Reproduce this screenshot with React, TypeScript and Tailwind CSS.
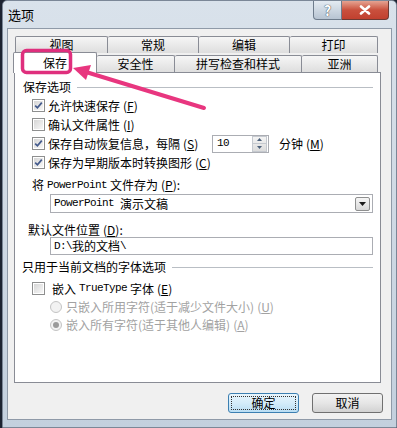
import React from 'react';

const cjk = "font-['Noto_Sans_CJK_SC','Noto_Sans_CJK_JP',sans-serif]";
const mono = "font-['Liberation_Mono','Noto_Sans_CJK_SC',monospace] tracking-[-0.6px] text-[11px]";

function CheckBox({ checked }: { checked?: boolean }) {
  return (
    <div className="w-[13px] h-[13px] shrink-0 border border-[#8e8f8f] bg-white p-px">
      <div className="w-full h-full bg-gradient-to-br from-[#d6d6d6] to-[#f7f7f7] flex items-center justify-center">
        {checked && (
          <svg width="9" height="9" viewBox="0 0 9 9">
            <path d="M1.2 4.6 L3.4 6.8 L7.8 1.6" fill="none" stroke="#435a8c" strokeWidth="1.7" />
          </svg>
        )}
      </div>
    </div>
  );
}

function Radio({ selected }: { selected?: boolean }) {
  return (
    <div className="w-[12px] h-[12px] shrink-0 rounded-full border border-[#c4c4c4] bg-[#f2f2f2] flex items-center justify-center">
      {selected && <div className="w-[6px] h-[6px] rounded-full bg-[#9a9a9a]" />}
    </div>
  );
}

function Key({ k }: { k: string }) {
  return (
    <span className="ml-[3px]">
      (<span className="underline">{k}</span>)
    </span>
  );
}

export default function App() {
  return (
    <div className={`relative w-[397px] h-[428px] bg-[#1c2331] overflow-hidden ${cjk}`}>
      <div className="ml-[2px] w-[395px] h-[428px] flex flex-col bg-gradient-to-b from-[#d9e2eb] via-[#cfd9e4] to-[#c3d0de] border border-[#7b8797] rounded-t-[5px]">
        {/* title bar */}
        <div className="h-[27px] flex items-start justify-between shrink-0">
          <div className="pl-[5px] pt-[6px] text-[13px] leading-[16px] text-black">选项</div>
          <div className="flex mr-[7px]">
            <div className="w-[29px] h-[19px] rounded-bl-[4px] border border-t-0 border-[#6e7c8c] bg-gradient-to-b from-[#e4ebf2] to-[#b7c4d2] flex items-center justify-center text-white text-[14px] font-bold leading-none [text-shadow:0_0_1px_#404a55,0_0_1px_#404a55]">
              ?
            </div>
            <div className="w-[47px] h-[19px] rounded-br-[4px] border border-l-0 border-t-0 border-[#6e3a33] bg-gradient-to-b from-[#e4a392] via-[#c9503d] to-[#c1402f] flex items-center justify-center">
              <svg width="12" height="10" viewBox="0 0 12 10">
                <path d="M2 1.5 L10 8.5 M10 1.5 L2 8.5" stroke="#fff" strokeWidth="2.6" strokeLinecap="round" />
              </svg>
            </div>
          </div>
        </div>

        {/* client area */}
        <div className="mx-[4px] h-[392px] bg-[#f0f0f0] border border-[#8f9aa8] pl-[6px] pr-[8px] pt-[7px] flex flex-col text-[12px] text-black">
          {/* upper tab row */}
          <div className="flex ml-px h-[17px] text-[12px] leading-none">
            {[
              ['视图', 'w-[93px]'],
              ['常规', 'w-[91px]'],
              ['编辑', 'w-[91px]'],
              ['打印', 'w-[88px]'],
            ].map(([t, w], i) => (
              <div
                key={t}
                className={`${w} h-[17px] border border-b-0 border-[#898c95] ${i > 0 ? 'border-l-0' : ''} rounded-t-[2px] bg-gradient-to-b from-[#f6f6f6] to-[#dedede] flex justify-center pt-[2px]`}
              >
                {t}
              </div>
            ))}
          </div>
          {/* lower tab row */}
          <div className="flex items-end -ml-px h-[19px] text-[12px] leading-none">
            <div className="relative z-10 w-[84px] h-[21px] -mb-px border border-b-0 border-[#898c95] rounded-t-[2px] bg-white flex justify-center pt-[4px]">
              保存
            </div>
            {[
              ['安全性', 'w-[78px]'],
              ['拼写检查和样式', 'w-[127px]'],
              ['亚洲', 'w-[76px]'],
            ].map(([t, w]) => (
              <div
                key={t}
                className={`${w} h-[17px] border border-l-0 border-b-0 border-[#898c95] rounded-t-[2px] bg-gradient-to-b from-[#f6f6f6] to-[#dedede] flex justify-center pt-[2px]`}
              >
                {t}
              </div>
            ))}
          </div>

          {/* panel */}
          <div className="h-[311px] w-[367px] bg-white border border-[#898c95] pt-[6px] pr-[7px] flex flex-col leading-none">
            <div className="flex items-center h-[16px] pl-[8px]">
              <span>保存选项</span>
              <div className="flex-1 ml-[6px] h-px bg-[#b9bec4]" />
            </div>

            <div className="mt-px flex flex-col">
              <div className="h-[19px] flex items-center pl-[17px]">
                <CheckBox checked />
                <span className="ml-[3px]">允许快速保存<Key k="F" /></span>
              </div>
              <div className="h-[19px] flex items-center pl-[17px]">
                <CheckBox />
                <span className="ml-[3px]">确认文件属性<Key k="I" /></span>
              </div>
              <div className="h-[19px] flex items-center pl-[17px]">
                <CheckBox checked />
                <span className="ml-[3px] w-[164px] shrink-0">保存自动恢复信息，每隔<Key k="S" /></span>
                <div className="w-[57px] h-[18px] border border-[#abadb3] flex items-center justify-between">
                  <span className={`pl-[4px] ${mono}`}>10</span>
                  <div className="w-[15px] h-[16px] mr-px flex flex-col border border-[#c5c9cf] bg-gradient-to-b from-[#f4f4f4] to-[#dcdcdc]">
                    <div className="flex-1 flex items-center justify-center border-b border-[#c5c9cf]">
                      <svg width="5" height="3" viewBox="0 0 5 3"><path d="M0 3 L2.5 0 L5 3 Z" fill="#4c607a" /></svg>
                    </div>
                    <div className="flex-1 flex items-center justify-center">
                      <svg width="5" height="3" viewBox="0 0 5 3"><path d="M0 0 L2.5 3 L5 0 Z" fill="#4c607a" /></svg>
                    </div>
                  </div>
                </div>
                <span className="ml-[10px]">分钟<Key k="M" /></span>
              </div>
              <div className="h-[19px] flex items-center pl-[17px]">
                <CheckBox checked />
                <span className="ml-[3px]">保存为早期版本时转换图形<Key k="C" /></span>
              </div>
            </div>

            <div className="mt-[5px] h-[16px] flex items-center pl-[17px]">
              将 <span className={`mx-[3px] ${mono}`}>PowerPoint</span> 文件存为<Key k="P" />:
            </div>
            <div className="mt-px ml-[35px] h-[19px] border border-[#abadb3] flex items-center justify-between">
              <span className="pl-[3px] flex items-center">
                <span className={mono}>PowerPoint</span>
                <span className="ml-[6px]">演示文稿</span>
              </span>
              <div className="w-[15px] h-[14px] mr-[2px] border border-[#8e8f8f] rounded-[2px] bg-gradient-to-b from-[#f6f6f6] to-[#d8d8d8] flex items-center justify-center">
                <svg width="7" height="4" viewBox="0 0 7 4"><path d="M0 0 L3.5 4 L7 0 Z" fill="#1a1a1a" /></svg>
              </div>
            </div>

            <div className="mt-[10px] h-[14px] flex items-center pl-[13px]">
              默认文件位置<Key k="D" />:
            </div>
            <div className="ml-[35px] h-[18px] border border-[#abadb3] flex items-center pl-[3px]">
              <span className={mono}>D:\</span>
              <span>我的文档</span>
              <span className={mono}>\</span>
            </div>

            <div className="mt-[4px] flex items-center h-[16px] pl-[7px]">
              <span>只用于当前文档的字体选项</span>
              <div className="flex-1 ml-[6px] h-px bg-[#b9bec4]" />
            </div>
            <div className="mt-[4px] h-[19px] flex items-center pl-[17px]">
              <CheckBox />
              <span className="ml-[7px] flex items-center">
                嵌入<span className={`mx-[3px] ${mono}`}>TrueType</span>字体<Key k="E" />
              </span>
            </div>
            <div className="h-[18px] flex items-center pl-[35px] text-[#a2a2a2]">
              <Radio />
              <span className="ml-[4px]">只嵌入所用字符(适于减少文件大小)<Key k="U" /></span>
            </div>
            <div className="h-[18px] flex items-center pl-[35px] text-[#a2a2a2]">
              <Radio selected />
              <span className="ml-[4px]">嵌入所有字符(适于其他人编辑)<Key k="A" /></span>
            </div>
          </div>

          {/* buttons */}
          <div className="mt-[10px] flex justify-end gap-[13px]">
            <div className="w-[71px] h-[20px] rounded-[3px] border border-[#3c7fb1] bg-gradient-to-b from-[#e8f5fc] via-[#d4ecfa] to-[#b9ddf3] p-[2px]">
              <div className="w-full h-full border border-dotted border-[#333] flex items-center justify-center leading-none">
                确定
              </div>
            </div>
            <div className="w-[71px] h-[20px] rounded-[3px] border border-[#707070] bg-gradient-to-b from-[#f2f2f2] via-[#e6e6e6] to-[#d2d2d2] flex items-center justify-center leading-none">
              取消
            </div>
          </div>
        </div>
      </div>

      {/* pink annotation drawn over the screenshot */}
      <svg className="absolute left-0 top-0 z-20 pointer-events-none" width="397" height="428" viewBox="0 0 397 428">
        <rect x="22.5" y="50.5" width="48" height="22" rx="4" fill="none" stroke="#df2f7d" strokeWidth="3.5" />
        <line x1="204" y1="108" x2="86" y2="72" stroke="#e8367f" strokeWidth="4" strokeLinecap="round" />
        <polygon points="73,68 91,65 86,80" fill="#e8367f" />
      </svg>
    </div>
  );
}
